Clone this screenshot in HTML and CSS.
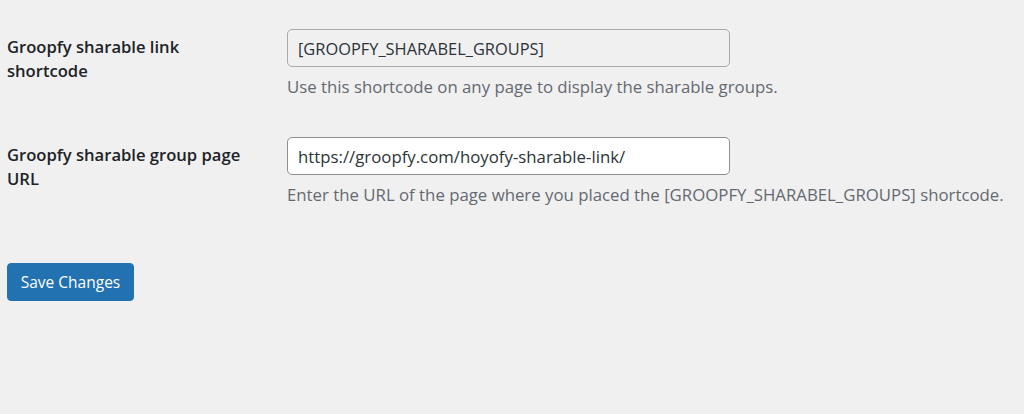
FILE: index.html
```html
<!DOCTYPE html>
<html lang="en">
<head>
<meta charset="utf-8">
<title>Groopfy settings</title>
<link rel="stylesheet" href="styles.css">
</head>
<body>
<form class="settings">
  <div class="form-table">
    <div class="row">
      <label class="th" for="shortcode">Groopfy sharable link shortcode</label>
      <div class="td">
        <input id="shortcode" class="field field-readonly" type="text" value="[GROOPFY_SHARABEL_GROUPS]" readonly>
        <p class="description">Use this shortcode on any page to display the sharable groups.</p>
      </div>
    </div>
    <div class="row">
      <label class="th" for="pageurl">Groopfy sharable group page URL</label>
      <div class="td">
        <input id="pageurl" class="field" type="text" value="https://groopfy.com/hoyofy-sharable-link/">
        <p class="description">Enter the URL of the page where you placed the [GROOPFY_SHARABEL_GROUPS] shortcode.</p>
      </div>
    </div>
  </div>
  <div class="submit">
    <button type="button" class="button-primary">Save Changes</button>
  </div>
</form>
</body>
</html>
```
FILE: styles.css
```css
html, body {
  margin: 0;
  padding: 0;
  background: #f0f0f0;
}
body {
  font-family: "Open Sans", "Noto Sans", "Liberation Sans", sans-serif;
  color: #1d2327;
  width: 1024px;
  height: 414px;
  overflow: hidden;
}
.settings {
  padding: 29px 0 0 7px;
}
.row {
  display: grid;
  grid-template-columns: 280px 1fr;
  margin-bottom: 39px;
}
.th {
  display: block;
  max-width: 250px;
  font-size: 16.6px;
  font-weight: 600;
  line-height: 24px;
  padding-top: 6px;
}
.td {
  display: flex;
  flex-direction: column;
  align-items: flex-start;
}
.field {
  box-sizing: border-box;
  width: 443px;
  height: 38px;
  margin: 0;
  padding: 0 10px;
  border: 1px solid #8c8f94;
  border-radius: 5px;
  background: #ffffff;
  color: #2c3338;
  font-family: inherit;
  font-size: 16.8px;
  outline: none;
}
.field-readonly {
  background: #f0f0f1;
  border-color: #a7aaad;
  font-size: 16.4px;
}
.description {
  margin: 9px 0 0;
  font-size: 16.8px;
  line-height: 22px;
  color: #646970;
}
.submit {
  padding-top: 18px;
}
.button-primary {
  box-sizing: border-box;
  width: 127px;
  height: 38px;
  padding: 0;
  border: 1px solid #2271b1;
  border-radius: 4px;
  background: #2271b1;
  color: #ffffff;
  font-family: inherit;
  font-size: 15.5px;
  cursor: pointer;
}
```
